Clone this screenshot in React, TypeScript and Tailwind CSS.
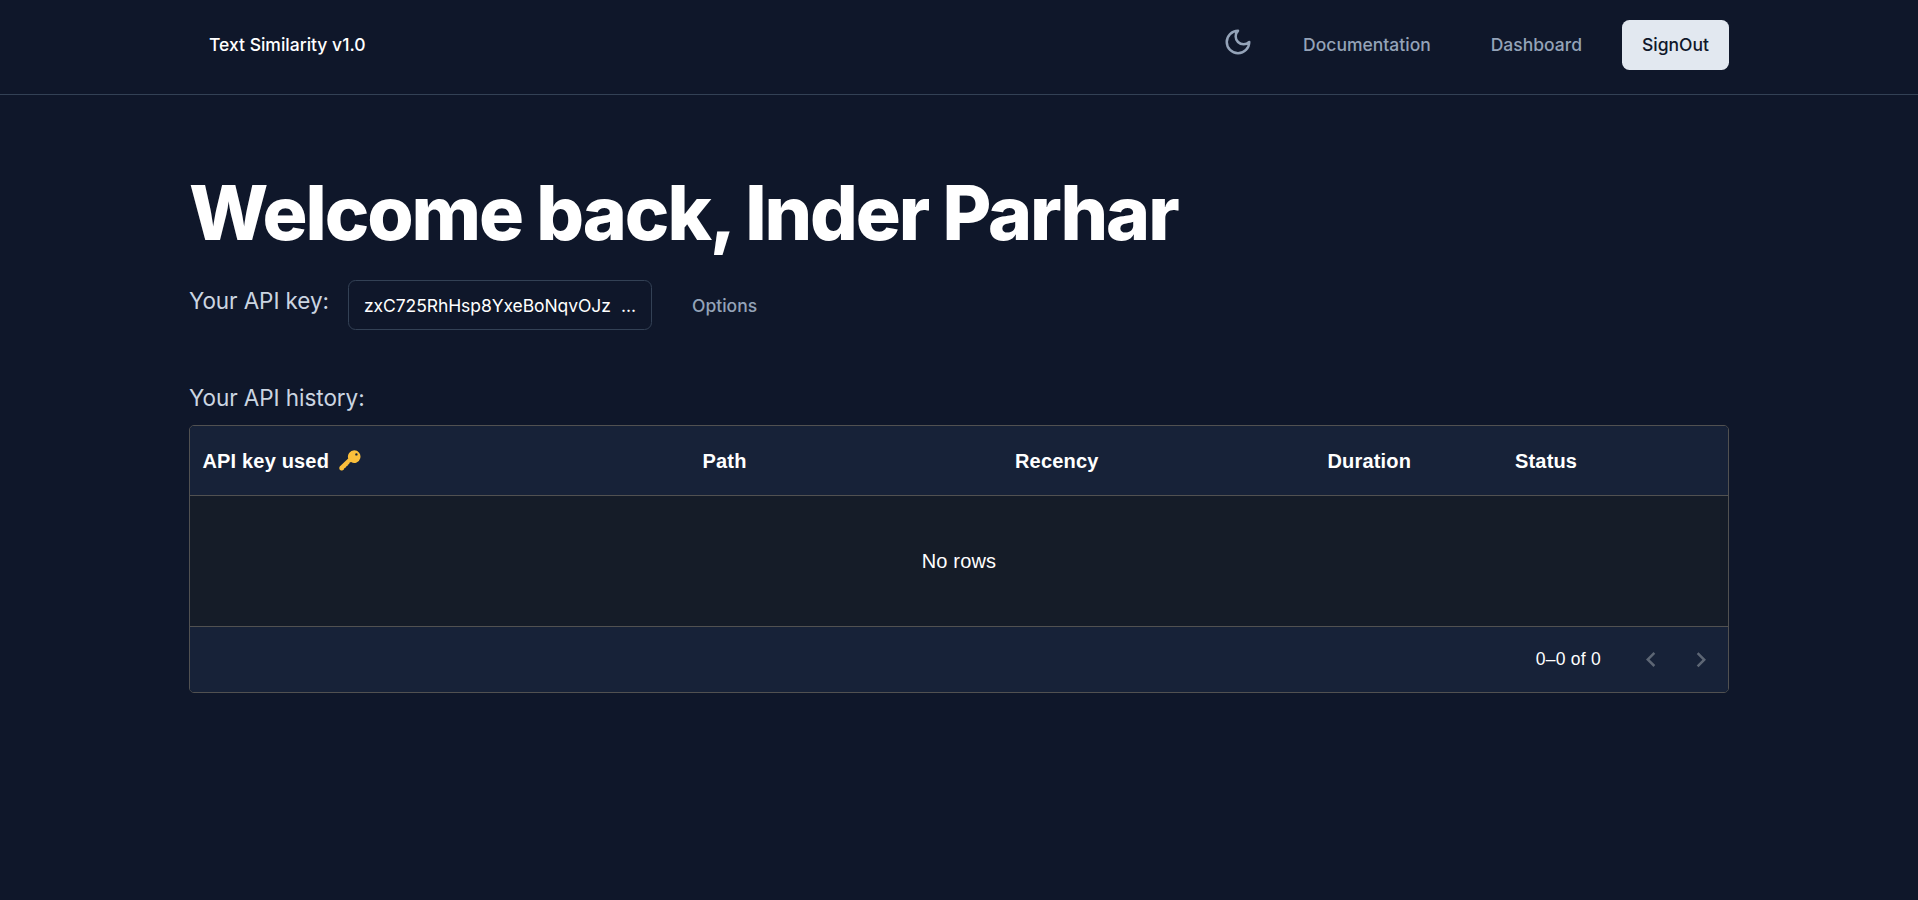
import type { ReactNode } from 'react';
import { clsx } from 'clsx';

interface Column {
  field: string;
  header: ReactNode;
  className: string;
}

function MoonIcon() {
  return (
    <svg
      className="size-[30px]"
      viewBox="0 0 24 24"
      fill="none"
      stroke="currentColor"
      strokeWidth="2"
      strokeLinecap="round"
      strokeLinejoin="round"
    >
      <path d="M12 3a6 6 0 0 0 9 9 9 9 0 1 1-9-9Z" />
    </svg>
  );
}

function KeyIcon() {
  return (
    <svg className="h-[21px] w-[22px]" viewBox="0 0 22 21">
      <path
        fill="#fbbf3b"
        fillRule="evenodd"
        d="M15.2 0.3a6.3 6.3 0 0 0-6 8.2L1 16.2c-.5.5-.7 1-.7 1.6v.8c0 1.1.9 1.9 1.9 1.9h1c.8 0 1.4-.5 1.7-1.2l.4-1.1 1.2-.4.6-1.3 1.3-.5.5-1.3 1.2-.6.6-1.5 1.4-.5a6.3 6.3 0 1 0 3.1-11.8Zm2.2 2.9a1.2 1.2 0 1 1 0 2.4 1.2 1.2 0 0 1 0-2.4Z"
      />
    </svg>
  );
}

const columns: Column[] = [
  {
    field: 'apikey',
    header: (
      <>
        API key used
        <KeyIcon />
      </>
    ),
    className: 'w-[500px]',
  },
  { field: 'path', header: 'Path', className: 'w-[312.5px]' },
  { field: 'timestamp', header: 'Recency', className: 'w-[312.5px]' },
  { field: 'duration', header: 'Duration', className: 'w-[187.5px]' },
  { field: 'status', header: 'Status', className: 'w-[187.5px]' },
];

function Navbar() {
  return (
    <header className="h-[95px] border-b border-[#334155] pt-5">
      <div className="mx-auto flex h-[50px] w-[1540px] items-center justify-between text-[17.5px] font-medium">
        <a className="pl-5 text-white">Text Similarity v1.0</a>
        <nav className="flex items-center gap-5 text-[#94a3b8]">
          <button className="px-2.5 pb-[7px]">
            <MoonIcon />
          </button>
          <a className="px-5">Documentation</a>
          <a className="px-5">Dashboard</a>
          <button className="h-[50px] rounded-[7.5px] bg-[#e2e8f0] px-5 text-[#0f172a]">
            SignOut
          </button>
        </nav>
      </div>
    </header>
  );
}

function ApiKeyRow() {
  return (
    <div className="mt-[30px] flex h-[50px] items-start">
      <p className="w-[139px] pt-[3px] text-[22.5px] leading-[35px] tracking-[-0.09px] whitespace-nowrap text-[#cbd5e1]">
        Your API key:
      </p>
      <div className="ml-5 flex h-[50px] w-[304px] items-center justify-between rounded-[7.5px] border border-[#334155] px-[15px] pt-0.5 text-[17.5px] text-white">
        <span className="tracking-[-0.08px]">zxC725RhHsp8YxeBoNqvOJz</span>
        <span>...</span>
      </div>
      <button className="ml-5 h-[50px] px-5 pt-0.5 text-[17.5px] font-medium text-[#94a3b8]">
        Options
      </button>
    </div>
  );
}

function HistoryTable() {
  return (
    <div className="mt-2.5 overflow-hidden rounded-[5px] border border-[#515151] bg-[#151c28] font-['Liberation_Sans',Arial,sans-serif] tracking-[0.17px] text-white">
      {/* Column headers */}
      <div className="flex h-[70px] items-center border-b border-[#515151] bg-[#172238] text-[20px] font-bold">
        {columns.map((column) => (
          <div
            key={column.field}
            className={clsx('flex items-center gap-2.5 px-[12.5px]', column.className)}
          >
            {column.header}
          </div>
        ))}
      </div>

      <div className="flex h-[130px] items-center justify-center text-[20px]">No rows</div>

      {/* Pagination */}
      <div className="flex h-[66px] items-center justify-end border-t border-[#515151] bg-[#172238] pr-0.5">
        <p className="text-[17.5px] tracking-[0.25px]">0–0 of 0</p>
        <div className="ml-[25px] flex text-[#5d6674]">
          <button className="p-2.5">
            <svg className="size-[30px]" viewBox="0 0 24 24" fill="currentColor">
              <path d="M15.41 16.09l-4.58-4.59 4.58-4.59L14 5.5l-6 6 6 6z" />
            </svg>
          </button>
          <button className="p-2.5">
            <svg className="size-[30px]" viewBox="0 0 24 24" fill="currentColor">
              <path d="M8.59 16.34l4.58-4.59-4.58-4.59L10 5.75l6 6-6 6z" />
            </svg>
          </button>
        </div>
      </div>
    </div>
  );
}

export default function App() {
  return (
    <div className="min-h-screen bg-[#0f172a] font-[Inter,sans-serif]">
      <Navbar />
      <main className="mx-auto w-[1540px] pt-20">
        <h1 className="text-[75px] leading-[75px] font-extrabold tracking-[-2.09px] text-white">
          Welcome back, Inder Parhar
        </h1>
        <ApiKeyRow />
        <p className="mt-[50px] text-[22.5px] leading-[35px] tracking-[-0.06px] text-[#cbd5e1]">
          Your API history:
        </p>
        <HistoryTable />
      </main>
    </div>
  );
}
